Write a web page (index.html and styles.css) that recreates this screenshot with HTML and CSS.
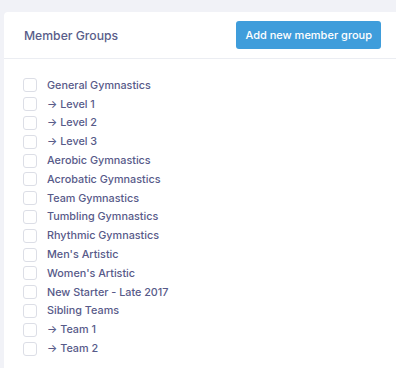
FILE: index.html
```html
<!DOCTYPE html>
<html lang="en">
<head>
    <meta charset="UTF-8">
    <meta name="viewport" content="width=device-width, initial-scale=1.0">
    <title>Member Groups</title>
    <link rel="stylesheet" href="styles.css">
</head>
<body>

    <div class="card">
        <!-- Kop kartu: judul dan tombol -->
        <div class="card-head">
            <h2 class="card-title">Member Groups</h2>
            <button class="btn-add">Add new member group</button>
        </div>

        <ul class="group-list">
            <li><span class="check"></span>General Gymnastics</li>
            <li><span class="check"></span>&rarr; Level 1</li>
            <li><span class="check"></span>&rarr; Level 2</li>
            <li><span class="check"></span>&rarr; Level 3</li>
            <li><span class="check"></span>Aerobic Gymnastics</li>
            <li><span class="check"></span>Acrobatic Gymnastics</li>
            <li><span class="check"></span>Team Gymnastics</li>
            <li><span class="check"></span>Tumbling Gymnastics</li>
            <li><span class="check"></span>Rhythmic Gymnastics</li>
            <li><span class="check"></span>Men's Artistic</li>
            <li><span class="check"></span>Women's Artistic</li>
            <li><span class="check"></span>New Starter - Late 2017</li>
            <li><span class="check"></span>Sibling Teams</li>
            <li><span class="check"></span>&rarr; Team 1</li>
            <li><span class="check"></span>&rarr; Team 2</li>
        </ul>
    </div>

</body>
</html>
```

FILE: styles.css
```css
body {
    margin: 0;
    padding: 12px 0 0 4px;
    background: #f1f2f7;
    font-family: Inter, "Open Sans", Arial, sans-serif;
    color: #575a89;
}
.card {
    background: #fff;
    border-radius: 4px 0 0 0;
    min-height: 356px;
}
.card-head {
    display: flex;
    align-items: center;
    justify-content: space-between;
    height: 46px;
    padding: 0 15px 0 20px;
    border-bottom: 1px solid #ebedf2;
}
.card-title {
    margin: 0;
    font-size: 12.2px;
    font-weight: 500;
    color: #595d8a;
}
.btn-add {
    height: 28px;
    padding: 0 9px;
    border: none;
    border-radius: 3px;
    background: #3f9ddb;
    color: #fff;
    font-family: inherit;
    font-size: 11px;
    font-weight: 500;
}
.group-list {
    list-style: none;
    margin: 0;
    padding: 17px 0 0 19px;
}
.group-list li {
    display: flex;
    align-items: center;
    height: 18.8px;
    font-size: 10.8px;
    font-weight: 500;
}
.check {
    width: 12px;
    height: 12px;
    border: 1px solid #dcdee6;
    border-radius: 3px;
    margin-right: 10px;
}
```
